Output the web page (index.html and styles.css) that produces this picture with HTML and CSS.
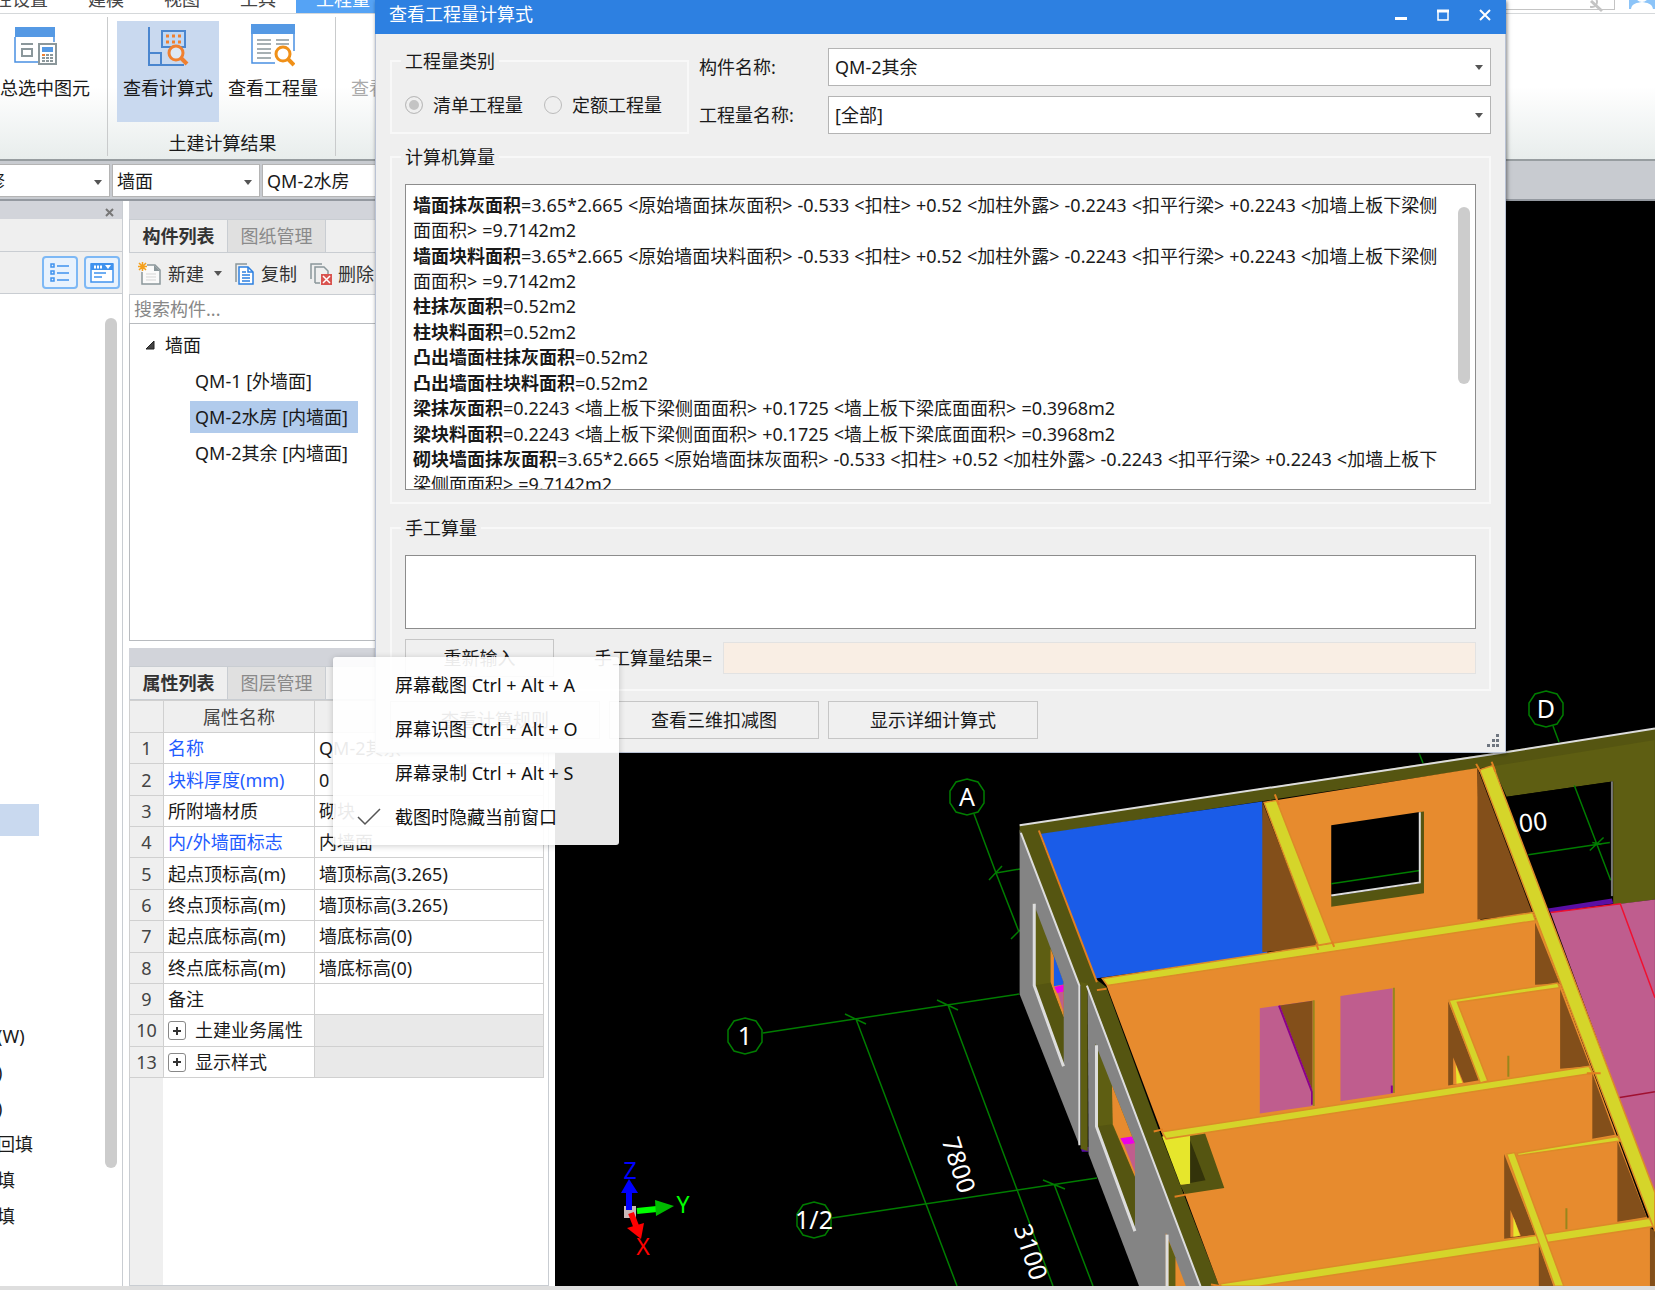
FILE: index.html
```
<!DOCTYPE html>
<html lang="zh-CN">
<head>
    <meta charset="UTF-8">
    <meta name="viewport" content="width=device-width, initial-scale=1.0">
    <title>查看工程量计算式</title>
    <link rel="stylesheet" href="styles.css">
</head>
<body>
    <header class="menu-bar">
        <nav class="menu-tabs">
            <a href="#" class="menu-tab">性设置</a>
            <a href="#" class="menu-tab">建模</a>
            <a href="#" class="menu-tab">视图</a>
            <a href="#" class="menu-tab">工具</a>
            <a href="#" class="menu-tab active">工程量</a>
        </nav>
        <div class="menu-right">
            <div class="menu-search">
                <svg width="14" height="14" viewBox="0 0 14 14"><path d="M1 1 L12 11" stroke="#c4c4c4" stroke-width="3"/><circle cx="2" cy="2" r="5" fill="none" stroke="#c4c4c4" stroke-width="2"/></svg>
            </div>
            <svg class="avatar" width="26" height="26" viewBox="0 0 26 26"><rect width="26" height="26" fill="#8cc4f8"/><circle cx="13" cy="12" r="7" fill="#fff"/><path d="M2 26c1-6 6-6 11-7c5 1 10 1 11 7z" fill="#fff"/></svg>
        </div>
    </header>

    <section class="ribbon">
        <div class="ribbon-group first">
            <button class="ribbon-btn wide">
                <svg width="44" height="44" viewBox="0 0 44 44">
                    <path d="M1 14V39H24M40 14V19" fill="none" stroke="#4a90e2" stroke-width="1.5"/>
                    <rect x="1" y="4" width="40" height="10" fill="#5599e4"/>
                    <path d="M7 21H19" stroke="#8b979b" stroke-width="2"/>
                    <rect x="8" y="26" width="10" height="7" fill="none" stroke="#8b979b" stroke-width="2"/>
                    <rect x="25" y="21" width="17" height="20" fill="#fff" stroke="#8b979b" stroke-width="2"/>
                    <rect x="28" y="24" width="11" height="5" fill="#5599e4"/>
                    <path d="M28 32H39M28 35H39M28 38H39" stroke="#8b979b" stroke-width="2" stroke-dasharray="3 1"/>
                    <rect x="28" y="31" width="3" height="2" fill="#f08030"/>
                </svg>
                汇总选中图元
            </button>
        </div>
        <div class="ribbon-group results">
            <div class="ribbon-buttons">
                <button class="ribbon-btn active">
                    <svg width="44" height="44" viewBox="0 0 44 44">
                        <path d="M3 4V42H38M3 30H15V42" fill="none" stroke="#4a86cf" stroke-width="2"/>
                        <rect x="16" y="8" width="23" height="16" fill="#c0d8f5" stroke="#4a86cf" stroke-width="2"/>
                        <path d="M20 13H36M20 19H36" stroke="#f08030" stroke-width="3" stroke-dasharray="3 3"/>
                        <circle cx="30" cy="30" r="7" fill="#dde8f6" stroke="#f08030" stroke-width="3"/>
                        <path d="M35 35L41 41" stroke="#f08030" stroke-width="4"/>
                    </svg>
                    查看计算式
                </button>
                <button class="ribbon-btn">
                    <svg width="44" height="44" viewBox="0 0 44 44">
                        <path d="M1 10V40H24M43 10V28" fill="none" stroke="#4a90e2" stroke-width="1.5"/>
                        <rect x="0" y="1" width="44" height="10" fill="#5599e4"/>
                        <path d="M6 17H20M6 21H20M6 26H20M6 30H20M6 35H20M25 17H38M25 21H38" stroke="#8b979b" stroke-width="1.5"/>
                        <circle cx="32" cy="31" r="7" fill="#fff" stroke="#f09018" stroke-width="3"/>
                        <path d="M37 36L43 42" stroke="#f09018" stroke-width="4"/>
                    </svg>
                    查看工程量
                </button>
            </div>
            <div class="ribbon-caption">土建计算结果</div>
        </div>
        <div class="ribbon-group">
            <button class="ribbon-btn" disabled><span class="icon-space"></span>查看计算书</button>
        </div>
    </section>

    <section class="picker-bar">
        <div class="combo picker category">
            <select aria-label="类别"><option>装修</option></select>
        </div>
        <div class="combo picker kind">
            <select aria-label="构件类型"><option>墙面</option></select>
        </div>
        <div class="combo picker component">
            <select aria-label="构件"><option>QM-2水房</option></select>
        </div>
    </section>

    <main class="workspace">
        <aside class="nav-panel">
            <div class="panel-header"><button class="close-btn" aria-label="关闭"><svg width="9" height="9" viewBox="0 0 9 9"><path d="M1 1L8 8M8 1L1 8" stroke="#777" stroke-width="2"/></svg></button></div>
            <div class="nav-title"></div>
            <div class="nav-tools">
                <button class="view-btn" aria-label="列表">
                    <svg width="20" height="20" viewBox="0 0 20 20" fill="none" stroke="#3f92ee" stroke-width="1.5"><path d="M1 1h3v3h-3zM1 8h3v3h-3zM1 15h3v3h-3zM7 3H19M7 10H19M7 17H19"/></svg>
                </button>
                <button class="view-btn" aria-label="窗口">
                    <svg width="24" height="20" viewBox="0 0 24 20"><rect x="1" y="1" width="22" height="18" fill="#fff" stroke="#3f92ee" stroke-width="1.5"/><rect x="1" y="0" width="22" height="7" fill="#3f92ee"/><path d="M4 4h8" stroke="#fff" stroke-width="3" stroke-dasharray="2 1"/><path d="M15 2h6l-3 4z" fill="#fff"/><path d="M4 10H16M4 14H12" stroke="#3f92ee" stroke-width="1.5"/></svg>
                </button>
            </div>
            <div class="nav-body">
                <ul class="nav-list">
                    <li class="selected"></li>
                    <li>(W)</li>
                    <li>)</li>
                    <li>)</li>
                    <li>回填</li>
                    <li>填</li>
                    <li>填</li>
                </ul>
                <div class="scroll-thumb"></div>
            </div>
        </aside>

        <div class="side-panels">
            <section class="component-panel">
                <div class="panel-header"></div>
                <div class="tabs">
                    <button class="tab active">构件列表</button>
                    <button class="tab">图纸管理</button>
                </div>
                <div class="toolbar">
                    <button class="tool-btn new">
                        <svg width="24" height="24" viewBox="0 0 24 24"><path d="M9 3H17L22 8V22H4V10" fill="#fafafa" stroke="#8b979b" stroke-width="1.5"/><path d="M16 3V9H22" fill="#8b979b"/><path d="M8 12h10M8 15h10M8 18h10" stroke="#d5d5d5"/><path d="M1 1L8 8M8 1L1 8M4.500 0V9M0 4.500H9" stroke="#f5a01c" stroke-width="1.500"/></svg>
                        新建<i class="caret"></i>
                    </button>
                    <button class="tool-btn copy">
                        <svg width="20" height="24" viewBox="0 0 20 24"><path d="M1 20V2H12" fill="none" stroke="#8b979b" stroke-width="1.5"/><path d="M4 5H13L18 10V22H4Z" fill="#fff" stroke="#2d80e1" stroke-width="1.500"/><path d="M13 5V10H18M7 10h4M7 13h8M7 16h8M7 19h8" fill="none" stroke="#2d80e1" stroke-width="1.500"/></svg>
                        复制
                    </button>
                    <button class="tool-btn delete">
                        <svg width="22" height="24" viewBox="0 0 22 24"><path d="M1 17V2H12M5 21V5H14L18 9V12M5 21H10" fill="none" stroke="#8b979b" stroke-width="1.5"/><rect x="11" y="12" width="11" height="11" fill="#d9534f"/><path d="M13 14l7 7M20 14l-7 7" stroke="#fff" stroke-width="1.500"/></svg>
                        删除
                    </button>
                </div>
                <input class="search-input" type="search" placeholder="搜索构件..." aria-label="搜索构件">
                <ul class="tree">
                    <li class="tree-root"><svg width="10" height="10" viewBox="0 0 10 10"><path d="M9 1V9H1Z" fill="#444" stroke="#222"/></svg>墙面</li>
                    <li class="tree-item"><span>QM-1 [外墙面]</span></li>
                    <li class="tree-item selected"><span>QM-2水房 [内墙面]</span></li>
                    <li class="tree-item"><span>QM-2其余 [内墙面]</span></li>
                </ul>
            </section>

            <section class="property-panel">
                <div class="panel-header"></div>
                <div class="tabs">
                    <button class="tab active">属性列表</button>
                    <button class="tab">图层管理</button>
                </div>
                <div class="property-body">
                    <table class="property-table">
                        <thead>
                            <tr><th class="col-num"></th><th class="col-name">属性名称</th><th>属性值</th></tr>
                        </thead>
                        <tbody>
                            <tr><th>1</th><td class="key">名称</td><td>QM-2其余</td></tr>
                            <tr><th>2</th><td class="key">块料厚度(mm)</td><td>0</td></tr>
                            <tr><th>3</th><td>所附墙材质</td><td>砌块</td></tr>
                            <tr><th>4</th><td class="key">内/外墙面标志</td><td>内墙面</td></tr>
                            <tr><th>5</th><td>起点顶标高(m)</td><td>墙顶标高(3.265)</td></tr>
                            <tr><th>6</th><td>终点顶标高(m)</td><td>墙顶标高(3.265)</td></tr>
                            <tr><th>7</th><td>起点底标高(m)</td><td>墙底标高(0)</td></tr>
                            <tr><th>8</th><td>终点底标高(m)</td><td>墙底标高(0)</td></tr>
                            <tr><th>9</th><td>备注</td><td></td></tr>
                            <tr><th>10</th><td class="group"><button class="expand" aria-label="展开"></button>土建业务属性</td><td class="off"></td></tr>
                            <tr><th>13</th><td class="group"><button class="expand" aria-label="展开"></button>显示样式</td><td class="off"></td></tr>
                        </tbody>
                    </table>
                </div>
            </section>
        </div>

        <div class="viewport">
            <svg class="model" viewBox="555 201 1100 1085" preserveAspectRatio="xMinYMin slice">
                <defs>
                    <polygon id="bubble" points="0,-18 11,-15 17,-6 17,6 11,15 0,18 -11,15 -17,6 -17,-6 -11,-15"/>
                </defs>

                <!-- axis grid -->
                <g class="grid">
                    <use href="#bubble" x="967" y="797"/>
                    <use href="#bubble" x="1546" y="709"/>
                    <use href="#bubble" x="745" y="1036"/>
                    <use href="#bubble" x="814" y="1220"/>
                    <path d="M974 814L996 873L1019 932M996 873L1020 869M989 880L1002 866M1011 939L1020 930"/>
                    <path d="M763 1033L1019 994M845 1014L866 1024M937 1000L958 1010M856 1019L957 1286M948 1005L1053 1286"/>
                    <path d="M832 1218L1097 1178M1043 1180L1065 1189M1054 1184L1093 1286"/>
                    <path d="M1553 726L1559 742M1419 753L1423 763"/>
                </g>

                <!-- building -->
                <g transform="translate(1000 740) scale(.4177 .3508)">
                    <polygon class="olive" points="1170,50 1568,-33 1568,455 1468,470 1468,118 1213,162"/>
                    <polygon class="black" points="1213,162 1465,118 1465,452 1312,480"/>
                    <path class="green" d="M1375 130L1462 400M1265 327L1460 292M1412 315L1445 278M1418 292L1440 298"/>
                    <path class="gray-line" d="M1465 118V445"/>
                    <polygon class="violet" points="1312,480 1465,452 1468,466 1318,492"/>
                    <polygon class="pink" points="1318,492 1568,455 1568,1300"/>
                    <path class="red" d="M1318 492L1485 467L1568 735"/>
                    <path class="darkred" d="M1480 1020L1568 1003"/>

                    <polygon class="dark" points="47,243 1568,-33 1568,0 1180,75 95,270 228,680 255,705 380,1110 525,1557 480,1557 208,700 190,700 47,265"/>
                    <polygon class="gray" points="47,255 190,700 190,1155 47,725"/>
                    <polygon class="violet" points="193,1160 212,1160 212,1174 196,1174"/>
                    <polygon class="olive" points="193,690 210,695 210,1172 193,1165"/>
                    <polygon class="gray" points="210,700 480,1557 333,1557 212,1180"/>

                    <!-- outside windows -->
                    <polygon class="olive" points="80,465 152,690 152,930 80,700"/>
                    <polygon class="orange" points="121,595 152,690 152,790 131,725 121,690"/>
                    <polygon class="blue" points="129,615 152,690 152,697 129,702"/>
                    <polygon class="magenta" points="130,704 152,698 152,718 137,722"/>
                    <polygon class="pink" points="138,722 152,718 152,775"/>
                    <polygon class="dark" points="82,700 121,692 152,790 152,925"/>
                    <path class="white thick" d="M82 467V700L152 930"/>
                    <polygon class="olive" points="228,865 323,1150 323,1400 228,1100"/>
                    <polygon class="orange" points="268,985 323,1150 323,1245 270,1095"/>
                    <polygon class="magenta" points="288,1135 316,1130 323,1150 297,1154"/>
                    <polygon class="pink" points="297,1154 323,1150 323,1232"/>
                    <polygon class="dark" points="230,1102 268,1095 323,1248 323,1395"/>
                    <path class="white thick" d="M231 870V1102L323 1400"/>
                    <polygon class="orange" points="397,1405 445,1557 397,1557"/>
                    <polygon class="olive" points="403,1425 420,1475 420,1557 403,1557"/>
                    <path class="white thick" d="M400 1410V1557"/>
                    <path class="white" d="M47 243L1210 35L1568 -33M50 265L190 700V1155M208 700L480 1557"/>

                    <!-- rooms -->
                    <polygon class="blue" points="95,268 628,175 640,610 228,680"/>
                    <polygon class="brown" points="628,175 765,590 628,605"/>
                    <polygon class="orange" points="660,172 1143,80 1150,520 795,585"/>
                    <polygon class="black" points="793,243 1005,205 1005,410 793,448"/>
                    <path class="green" d="M793 410L1005 372"/>
                    <polygon class="dark" points="793,446 1005,409 1005,205 1015,204 1015,437 793,475"/>
                    <path class="white" d="M793 443L1005 406V206"/>
                    <polygon class="brown" points="1143,80 1275,495 1143,512"/>
                    <polygon class="orange" points="255,700 1285,512 1610,1557 525,1557"/>

                    <!-- doors -->
                    <polygon class="pink" points="622,765 748,743 748,1043 622,1065"/>
                    <polygon class="brown" points="670,757 748,743 748,1000"/>
                    <path class="purple" d="M668 757L747 1003V1040"/>
                    <polygon class="pink" points="815,730 940,708 940,1008 815,1030"/>
                    <path class="ochre" d="M751 742V1043M943 706V1006M1217 900V960M1356 1335V1395"/>
                    <path class="purple" d="M938 985V1006"/>

                    <polygon class="brown" points="1281,520 1340,695 1281,698"/>
                    <polygon class="brown" points="1341,710 1412,930 1341,937"/>
                    <polygon class="brown" points="1418,950 1472,1125 1418,1137"/>
                    <polygon class="brown" points="1478,1143 1548,1360 1478,1373"/>
                    <polygon class="brown" points="1556,1390 1568,1400 1568,1557 1556,1557"/>
                    <polygon class="brown" points="1073,745 1147,970 1073,985"/>
                    <polygon class="orange" points="1085,905 1110,978 1085,982"/>
                    <polygon class="bright" points="1091,925 1107,978 1093,980"/>
                    <polygon class="brown" points="1207,1180 1282,1410 1207,1422"/>
                    <polygon class="orange" points="1222,1340 1247,1413 1222,1417"/>
                    <polygon class="bright" points="1229,1360 1245,1413 1229,1416"/>
                    <polygon class="brown" points="1290,1440 1325,1557 1290,1557"/>

                    <!-- shaft -->
                    <polygon class="dark" points="452,1127 490,1118 537,1277 443,1294 430,1268 452,1265"/>
                    <polygon class="shade" points="455,1140 492,1255 455,1263"/>
                    <polygon class="bright" points="388,1130 455,1122 455,1265 432,1268"/>

                    <!-- wall tops -->
                    <polygon class="beam" points="245,680 1275,492 1282,515 257,700"/>
                    <polygon class="beam" points="632,178 662,172 795,578 762,585"/>
                    <polygon class="beam" points="1075,742 1335,693 1340,706 1095,748 1168,972 1150,978"/>
                    <polygon class="beam" points="388,1117 1410,930 1420,950 398,1137"/>
                    <polygon class="beam" points="1238,1178 1478,1130 1485,1143 1240,1185"/>
                    <polygon class="beam" points="528,1550 1555,1363 1564,1387 620,1557 528,1557"/>
                    <polygon class="beam" points="1213,1180 1232,1176 1350,1557 1328,1557"/>
                    <polygon class="beam" points="1148,85 1180,73 1568,1290 1568,1400"/>
                    <path class="edge" d="M93 258L232 690M232 713L255 709M368 1116L390 1110M418 1302L445 1296M1140 68L1150 90M1177 62L1186 90M658 155L668 185M757 580L762 598M795 575L800 590M1405 950L1438 950M505 1552L530 1557"/>
                </g>

                <g class="dims">
                    <text x="967" y="806">A</text>
                    <text x="1546" y="718">D</text>
                    <text x="745" y="1045">1</text>
                    <text x="814" y="1229">1/2</text>
                    <text x="1533" y="831" transform="rotate(-6 1533 822)">00</text>
                    <text x="959" y="1174" transform="rotate(72 959 1165)">7800</text>
                    <text x="1031" y="1261" transform="rotate(72 1031 1252)">3100</text>
                </g>

                <!-- orientation gizmo -->
                <g class="gizmo">
                    <rect x="624" y="1206" width="12" height="12" fill="#c8b8b8"/>
                    <path d="M629 1210V1192" stroke="#00f" stroke-width="6"/>
                    <polygon points="621,1193 638,1193 629,1179" fill="#00f"/>
                    <path d="M637 1211L657 1209" stroke="#0f0" stroke-width="6"/>
                    <polygon points="655,1200 656,1216 674,1206" fill="#0b0"/>
                    <path d="M631 1213L636 1226" stroke="#f00" stroke-width="6"/>
                    <polygon points="627,1228 644,1223 641,1239" fill="#f00"/>
                    <text x="630" y="1179" fill="#00f">Z</text>
                    <text x="683" y="1213" fill="#0f0">Y</text>
                    <text x="643" y="1255" fill="#f00">X</text>
                </g>
            </svg>
        </div>
    </main>
    <footer class="status-bar"></footer>

    <!-- formula dialog -->
    <div class="dialog" role="dialog" aria-labelledby="dialog-title">
        <div class="dialog-title">
            <span id="dialog-title">查看工程量计算式</span>
            <div class="window-btns">
                <button aria-label="最小化"><svg width="12" height="12" viewBox="0 0 12 12"><path d="M0 9.500H12" stroke="#fff" stroke-width="3"/></svg></button>
                <button aria-label="最大化"><svg width="12" height="12" viewBox="0 0 12 12"><path d="M1 2V11H11V2" fill="none" stroke="#fff" stroke-width="1.500"/><path d="M0 2H12" stroke="#fff" stroke-width="3"/></svg></button>
                <button aria-label="关闭"><svg width="12" height="12" viewBox="0 0 12 12"><path d="M1 1L11 11M11 1L1 11" stroke="#fff" stroke-width="2"/></svg></button>
            </div>
        </div>
        <div class="dialog-body">
            <div class="dialog-top">
                <fieldset class="group-box category-box">
                    <legend>工程量类别</legend>
                    <label><input type="radio" name="category" checked disabled>清单工程量</label>
                    <label><input type="radio" name="category" disabled>定额工程量</label>
                </fieldset>
                <div class="fields">
                    <div class="field">
                        <label for="component-name">构件名称:</label>
                        <div class="combo"><select id="component-name"><option>QM-2其余</option></select></div>
                    </div>
                    <div class="field">
                        <label for="quantity-name">工程量名称:</label>
                        <div class="combo"><select id="quantity-name"><option>[全部]</option></select></div>
                    </div>
                </div>
            </div>

            <fieldset class="group-box machine-box">
                <legend>计算机算量</legend>
                <div class="formula-box">
                    <div class="formulas">
                        <p><b>墙面抹灰面积</b>=3.65*2.665<span>&lt;原始墙面抹灰面积&gt;</span>-0.533<span>&lt;扣柱&gt;</span>+0.52<span>&lt;加柱外露&gt;</span>-0.2243<span>&lt;扣平行梁&gt;</span>+0.2243<span>&lt;加墙上板下梁侧面面积&gt;</span>=9.7142m2</p>
                        <p><b>墙面块料面积</b>=3.65*2.665<span>&lt;原始墙面块料面积&gt;</span>-0.533<span>&lt;扣柱&gt;</span>+0.52<span>&lt;加柱外露&gt;</span>-0.2243<span>&lt;扣平行梁&gt;</span>+0.2243<span>&lt;加墙上板下梁侧面面积&gt;</span>=9.7142m2</p>
                        <p><b>柱抹灰面积</b>=0.52m2</p>
                        <p><b>柱块料面积</b>=0.52m2</p>
                        <p><b>凸出墙面柱抹灰面积</b>=0.52m2</p>
                        <p><b>凸出墙面柱块料面积</b>=0.52m2</p>
                        <p><b>梁抹灰面积</b>=0.2243<span>&lt;墙上板下梁侧面面积&gt;</span>+0.1725<span>&lt;墙上板下梁底面面积&gt;</span>=0.3968m2</p>
                        <p><b>梁块料面积</b>=0.2243<span>&lt;墙上板下梁侧面面积&gt;</span>+0.1725<span>&lt;墙上板下梁底面面积&gt;</span>=0.3968m2</p>
                        <p><b>砌块墙面抹灰面积</b>=3.65*2.665<span>&lt;原始墙面抹灰面积&gt;</span>-0.533<span>&lt;扣柱&gt;</span>+0.52<span>&lt;加柱外露&gt;</span>-0.2243<span>&lt;扣平行梁&gt;</span>+0.2243<span>&lt;加墙上板下梁侧面面积&gt;</span>=9.7142m2</p>
                    </div>
                    <div class="scroll-thumb"></div>
                </div>
            </fieldset>

            <fieldset class="group-box manual-box">
                <legend>手工算量</legend>
                <textarea aria-label="手工算量"></textarea>
                <div class="manual-row">
                    <button class="dialog-btn reset">重新输入</button>
                    <label for="manual-result">手工算量结果=</label>
                    <input id="manual-result" type="text" readonly>
                </div>
            </fieldset>

            <div class="dialog-actions">
                <button class="dialog-btn">查看计算规则</button>
                <button class="dialog-btn">查看三维扣减图</button>
                <button class="dialog-btn">显示详细计算式</button>
            </div>
        </div>
        <svg class="grip" width="14" height="14" viewBox="0 0 14 14"><path d="M9 0h3v3h-3zM5 5h3v3h-3zM9 5h3v3h-3zM0 10h3v3h-3zM5 10h3v3h-3zM9 10h3v3h-3z" fill="#6f7680"/></svg>
    </div>

    <!-- screenshot tool menu -->
    <div class="popup-menu">
        <button class="popup-item">屏幕截图 Ctrl + Alt + A</button>
        <button class="popup-item">屏幕识图 Ctrl + Alt + O</button>
        <button class="popup-item">屏幕录制 Ctrl + Alt + S</button>
        <button class="popup-item checked"><svg width="24" height="18" viewBox="0 0 24 18"><path d="M1 9L8 16L23 1" fill="none" stroke="#555" stroke-width="1.500"/></svg>截图时隐藏当前窗口</button>
    </div>
</body>
</html>
```
FILE: styles.css
```
:root {
    --blue: #2d80e1;
    --face: #efefef;
    --header: #d2d4da;
    --line: #c9cdd2;
    --selected: #c9d9ef;
    --text: #1a1a1a;
}

* {
    margin: 0;
    padding: 0;
    box-sizing: border-box;
}

body {
    display: flex;
    flex-direction: column;
    height: 100vh;
    overflow: hidden;
    position: relative;
    background: #fff;
    color: var(--text);
    font-family: "Noto Sans", "Noto Sans CJK SC", sans-serif;
    font-size: 18px;
    line-height: 24px;
}

button, input, select, textarea {
    font: inherit;
    color: inherit;
}

button {
    border: none;
    background: none;
    white-space: nowrap;
}

ul {
    list-style: none;
}

/* menu bar */
.menu-bar {
    display: flex;
    justify-content: space-between;
    align-items: flex-end;
    height: 14px;
    flex: none;
    overflow: hidden;
    border-bottom: 1px solid #d5d8da;
}

.menu-tabs {
    display: flex;
    margin-left: -26px;
}

.menu-tab {
    height: 28px;
    padding: 2px 20px;
    color: #444;
    text-decoration: none;
    white-space: nowrap;
}

.menu-tab.active {
    background: #55a3f5;
    color: #fff;
}

.menu-right {
    display: flex;
    align-items: flex-end;
    gap: 14px;
    height: 28px;
}

.menu-search {
    width: 240px;
    height: 28px;
    margin-bottom: 3px;
    padding: 12px 10px 0 0;
    border: 1px solid #c4c4c4;
    text-align: right;
}

.avatar {
    margin-bottom: 4px;
}

/* ribbon */
.ribbon {
    display: flex;
    flex: none;
    height: 145px;
    padding: 3px 0;
    background: linear-gradient(#fff 50%, #e8edec);
}

.ribbon-group {
    padding: 4px 9px 0;
    border-right: 1px solid #c9cbcc;
}

.ribbon-group.first {
    width: 108px;
    padding-left: 0;
    overflow: hidden;
}

.ribbon-group.results {
    padding-right: 11px;
}

.ribbon-group:last-child {
    border: none;
}

.ribbon-buttons {
    display: flex;
    gap: 3px;
}

.ribbon-btn {
    display: flex;
    flex-direction: column;
    align-items: center;
    gap: 9px;
    width: 102px;
    height: 101px;
    padding-top: 2px;
}

.ribbon-btn.wide {
    width: 108px;
    margin-left: -18px;
}

.ribbon-btn.active {
    background: var(--selected);
}

.ribbon-btn:disabled {
    color: #aaa;
}

.icon-space {
    height: 44px;
}

.ribbon-caption {
    margin-top: 9px;
    padding-left: 4px;
    text-align: center;
}

/* combo boxes */
.combo {
    position: relative;
    flex: 1;
}

.combo select {
    display: block;
    width: 100%;
    height: 38px;
    padding: 0 6px;
    border: 1px solid #b4b4b4;
    border-radius: 0;
    background: #fff;
    appearance: none;
}

.combo::after {
    content: "";
    position: absolute;
    right: 8px;
    top: 50%;
    margin-top: -2px;
    border: 4px solid transparent;
    border-top: 5px solid #555;
    border-bottom: none;
}

.picker-bar {
    display: flex;
    gap: 2px;
    flex: none;
    height: 42px;
    padding-top: 3px;
    border-top: 2px solid #979da0;
    border-bottom: 2px solid #9499a0;
    background: #c8cbd0;
}

.picker {
    flex: none;
}

.picker select {
    height: 33px;
    padding: 0 4px;
}

.picker.category {
    width: 146px;
    margin-left: -36px;
}

.picker.kind {
    width: 148px;
}

.picker.component {
    width: 240px;
}

/* side panels */
.workspace {
    display: flex;
    flex: 1;
    min-height: 0;
}

.panel-header {
    display: flex;
    justify-content: flex-end;
    height: 18px;
    flex: none;
    padding-right: 8px;
    background: var(--header);
}

.close-btn {
    line-height: 18px;
}

.nav-panel {
    display: flex;
    flex-direction: column;
    width: 123px;
    flex: none;
    border-right: 1px solid var(--line);
}

.nav-title {
    height: 33px;
    background: var(--face);
    border-bottom: 1px solid var(--line);
}

.nav-tools {
    display: flex;
    justify-content: flex-end;
    align-items: center;
    gap: 6px;
    height: 42px;
    padding-right: 2px;
    background: var(--face);
    border-bottom: 1px solid var(--line);
}

.view-btn {
    display: flex;
    align-items: center;
    justify-content: center;
    width: 36px;
    height: 33px;
    border: 2px solid #7db8f5;
    border-radius: 4px;
    background: #e8f2fd;
}

.nav-body {
    display: flex;
    flex-direction: column;
    justify-content: flex-end;
    flex: 1;
    position: relative;
    padding-bottom: 52px;
    overflow: hidden;
}

.nav-list li {
    height: 36px;
    line-height: 36px;
    margin-left: -3px;
}

.nav-list .selected {
    width: 42px;
    height: 32px;
    margin-bottom: 182px;
    background: var(--selected);
}

.scroll-thumb {
    position: absolute;
    top: 24px;
    right: 5px;
    width: 12px;
    height: 850px;
    border-radius: 6px;
    background: #ccc;
}

.side-panels {
    display: flex;
    flex-direction: column;
    gap: 7px;
    width: 420px;
    flex: none;
    margin: 0 6px;
}

.component-panel {
    display: flex;
    flex-direction: column;
    height: 440px;
}

.tabs {
    display: flex;
    flex: none;
    height: 34px;
    background: var(--face);
    border: 1px solid var(--line);
}

.tab {
    width: 98px;
    background: #e0e0e0;
    color: #8a8a8a;
    border-right: 1px solid var(--line);
}

.tab.active {
    background: var(--face);
    color: #333;
    font-weight: bold;
}

.toolbar {
    display: flex;
    align-items: center;
    gap: 13px;
    height: 42px;
    flex: none;
    padding-left: 9px;
    background: var(--face);
    border-bottom: 1px solid var(--line);
}

.tool-btn {
    display: flex;
    align-items: center;
    gap: 6px;
    color: #333;
}

.caret {
    margin-left: 4px;
    border: 4px solid transparent;
    border-top: 5px solid #555;
    border-bottom: none;
}

.search-input {
    width: 100%;
    height: 28px;
    flex: none;
    padding: 0 4px;
    border: none;
    border-left: 1px solid var(--line);
    outline: none;
    appearance: none;
}

.search-input::placeholder {
    color: #888;
}

.tree {
    flex: 1;
    padding-top: 3px;
    border: 1px solid #b8bbbf;
}

.tree li {
    display: flex;
    align-items: center;
    height: 36px;
    white-space: nowrap;
}

.tree-root {
    gap: 10px;
    padding-left: 15px;
}

.tree-item {
    padding-left: 60px;
}

.tree-item span {
    padding: 4px 10px 4px 5px;
}

.tree-item.selected span {
    background: #b1cbec;
}

.property-panel {
    display: flex;
    flex-direction: column;
    flex: 1;
    min-height: 0;
}

.property-body {
    flex: 1;
    min-height: 0;
    border: 1px solid var(--line);
    border-top: none;
    background: linear-gradient(to right, var(--face) 33px, #fff 33px);
}

.property-table {
    width: 415px;
    height: 378px;
    table-layout: fixed;
    border-collapse: collapse;
    margin-left: -1px;
}

.property-table tr {
    height: 31px;
}

.property-table thead tr {
    height: 32px;
}

.property-table th,
.property-table td {
    border: 1px solid #d0d0d0;
    text-align: left;
    white-space: nowrap;
}

.property-table td {
    padding-left: 4px;
    background: #fff;
}

.property-table th {
    background: var(--face);
    color: #444;
    font-weight: normal;
    text-align: center;
}

.property-table .col-num {
    width: 34px;
}

.property-table .col-name {
    width: 151px;
}

.property-table .key {
    color: #1f5cff;
}

.property-table .off {
    background: #e9e9e9;
}

.expand {
    width: 18px;
    height: 19px;
    margin-right: 9px;
    border: 1px solid #888;
    border-radius: 3px;
    vertical-align: -2px;
    background: linear-gradient(#333, #333) center / 8px 2px no-repeat, linear-gradient(#333, #333) center / 2px 8px no-repeat;
}

/* 3D view */
.viewport {
    flex: 1;
    min-width: 0;
    background: #000;
    overflow: hidden;
}

.model {
    display: block;
    width: 100%;
    height: 100%;
}

.model path, .model polygon, .model use {
    vector-effect: non-scaling-stroke;
}

.grid {
    fill: none;
    stroke: #007d00;
    stroke-width: 1.5;
}

.dims {
    fill: #fff;
    font-size: 25px;
    text-anchor: middle;
}

.gizmo text {
    font-size: 23px;
    text-anchor: middle;
}

.olive { fill: #5e5e12; }
.dark { fill: #555511; }
.shade { fill: #33330a; }
.gray { fill: #848484; }
.black { fill: #000; }
.blue { fill: #1a5ce8; }
.brown { fill: #834f1a; }
.orange { fill: #e78b2e; }
.pink { fill: #bf5d8e; }
.magenta { fill: #ea00ea; }
.violet { fill: #5a0fa5; }
.bright { fill: #e6e62c; }
.beam { fill: #d5d52a; stroke: #dc8a28; stroke-width: 1.5; }
.white { fill: none; stroke: #ddd; stroke-width: 2; }
.thick { stroke-width: 3; }
.green { fill: none; stroke: #007d00; stroke-width: 1.5; }
.red { fill: none; stroke: #f01030; stroke-width: 1.5; }
.darkred { fill: none; stroke: #a01030; stroke-width: 1.5; }
.purple { fill: none; stroke: #8a008a; stroke-width: 2; }
.ochre { fill: none; stroke: #98861c; stroke-width: 2; }
.edge { fill: none; stroke: #e07f20; stroke-width: 2; }
.gray-line { fill: none; stroke: #777; stroke-width: 2; }

.status-bar {
    height: 4px;
    flex: none;
    background: #dedede;
}

/* dialog */
.dialog {
    position: absolute;
    top: 0;
    left: 375px;
    right: 149px;
    background: var(--face);
    border: 1px solid #b9c2d4;
    border-top: none;
    box-shadow: 1px 1px 4px rgba(0, 0, 0, 0.5);
}

.dialog-title {
    display: flex;
    justify-content: space-between;
    align-items: center;
    height: 34px;
    margin: 0 -1px;
    padding: 0 15px 6px 14px;
    background: var(--blue);
    color: #fff;
}

.window-btns {
    display: flex;
    gap: 30px;
}

.window-btns button {
    height: 12px;
    line-height: 12px;
}

.dialog-body {
    padding: 14px 14px 13px;
}

.dialog-top {
    display: flex;
    align-items: flex-start;
    gap: 10px;
}

.group-box {
    min-width: 0;
    padding: 15px 13px 12px;
    border: 2px solid #f8f8f8;
}

.group-box legend {
    margin-left: -4px;
    padding: 0 4px;
}

.category-box {
    display: flex;
    gap: 21px;
    width: 299px;
    height: 85px;
    margin-top: 1px;
    padding-top: 17px;
}

.category-box label {
    display: flex;
    align-items: center;
    gap: 10px;
    white-space: nowrap;
}

.category-box input {
    width: 18px;
    height: 18px;
    appearance: none;
    border: 1px solid #bbb;
    border-radius: 50%;
}

.category-box input:checked {
    background: #c4c4c4;
    box-shadow: inset 0 0 0 3px var(--face);
}

.fields {
    display: flex;
    flex-direction: column;
    gap: 10px;
    flex: 1;
}

.field {
    display: flex;
    align-items: center;
}

.field label {
    width: 129px;
}

.machine-box {
    margin-top: 11px;
}

.formula-box {
    position: relative;
    height: 306px;
    padding: 8px 28px 0 7px;
    border: 1px solid #8c8c8c;
    background: #fff;
    overflow: hidden;
}

.formulas p {
    line-height: 25px;
}

.formulas p:nth-child(odd) {
    margin-bottom: 1px;
}

.formulas span {
    padding: 0 5px;
}

.formula-box .scroll-thumb {
    top: 22px;
    height: 177px;
}

.manual-box {
    margin-top: 12px;
}

.manual-box textarea {
    display: block;
    width: 100%;
    height: 74px;
    border: 1px solid #8c8c8c;
    background: #fff;
    resize: none;
}

.manual-row {
    display: flex;
    align-items: center;
    margin-top: 10px;
}

.manual-row label {
    width: 129px;
    margin-left: 40px;
    white-space: nowrap;
}

.manual-row input {
    flex: 1;
    min-width: 0;
    height: 32px;
    border: 1px solid #e2e2e2;
    background: #f9eee4;
}

.dialog-btn {
    width: 210px;
    height: 38px;
    border: 1px solid #c6c6c6;
    background: #f0f0f0;
}

.dialog-btn.reset {
    width: 149px;
}

.dialog-actions {
    display: flex;
    gap: 9px;
    margin-top: 10px;
}

.grip {
    position: absolute;
    right: 4px;
    bottom: 4px;
}

/* popup menu */
.popup-menu {
    position: absolute;
    top: 657px;
    left: 333px;
    width: 286px;
    padding: 6px 0;
    border-radius: 3px;
    background: rgba(255, 255, 255, 0.91);
    box-shadow: 0 1px 6px rgba(0, 0, 0, 0.2);
}

.popup-item {
    display: flex;
    align-items: center;
    width: 100%;
    height: 44px;
    padding-left: 62px;
    color: #111;
}

.popup-item.checked {
    gap: 14px;
    padding-left: 24px;
}
```
